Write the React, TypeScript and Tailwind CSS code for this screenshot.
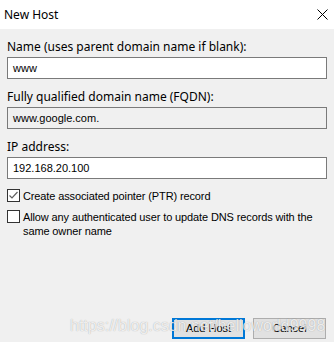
const ui = { fontFamily: '"Noto Sans", "Segoe UI", Arial, sans-serif' };
const ms = { fontFamily: '"Liberation Sans", Arial, sans-serif' };

const Field = ({ label, value, readOnly }: { label: string; value: string; readOnly?: boolean }) => {
  return (
    <div className="flex flex-col">
      <label className="text-[12px] leading-[14px] text-black">{label}</label>
      <div
        className={`mt-[3px] h-[22px] border border-[#7a7a7a] flex items-center pl-[5px] text-[11px] text-black ${
          readOnly ? "bg-[#f0f0f0]" : "bg-white"
        }`}
        style={ms}
      >
        {value}
      </div>
    </div>
  );
};

const Check = ({ checked, children }: { checked?: boolean; children: React.ReactNode }) => {
  return (
    <div className="flex items-start gap-[3px] text-[11px] leading-[14px] tracking-[-0.12px] text-black" style={ms}>
      <span className="w-[13px] h-[13px] border border-[#333] bg-white flex items-center justify-center shrink-0">
        {checked && (
          <svg width="11" height="11" viewBox="0 0 11 11">
            <polyline points="1.5,5.5 4,8 9.5,2" fill="none" stroke="#606060" strokeWidth="1.2" />
          </svg>
        )}
      </span>
      <span className="pt-[0px]">{children}</span>
    </div>
  );
};

export default function App() {
  return (
    <div className="relative w-[334px] h-[342px] flex flex-col bg-[#f0f0f0] overflow-hidden" style={ui}>
      <div className="h-[29px] bg-white flex items-center justify-between pl-[4px] pr-[6px] shrink-0">
        <span className="text-[12px] text-black">New Host</span>
        <svg width="11" height="11" viewBox="0 0 11 11">
          <path d="M0.5 0.5 L10.5 10.5 M10.5 0.5 L0.5 10.5" stroke="#000" strokeWidth="1" fill="none" />
        </svg>
      </div>

      <div className="flex-1 flex flex-col px-[7px] pt-[11px]">
        <div className="flex flex-col gap-[11px]">
          <Field label="Name (uses parent domain name if blank):" value="www" />
          <Field label="Fully qualified domain name (FQDN):" value="www.google.com." readOnly />
          <Field label="IP address:" value="192.168.20.100" />
        </div>

        <div className="mt-[10px] flex flex-col gap-[7px]">
          <Check checked>Create associated pointer (PTR) record</Check>
          <Check>Allow any authenticated user to update DNS records with the same owner name</Check>
        </div>

        <div className="mt-auto flex justify-end gap-[8px] pb-[3px] pr-[1px]" style={ms}>
          <button className="w-[73px] h-[21px] border-2 border-[#0078d7] bg-[#e1e1e1] text-[11px] text-black leading-none">
            Add Host
          </button>
          <button className="w-[73px] h-[21px] border border-[#adadad] bg-[#e1e1e1] text-[11px] text-black leading-none">
            Cancel
          </button>
        </div>
      </div>

      <div
        className="absolute left-[70px] top-[314px] text-[16px] leading-normal text-white/80 pointer-events-none whitespace-nowrap [text-shadow:0_0_1px_rgba(0,0,0,0.35)]"
        style={ms}
      >
        https://blog.csdn.net/helloworld9998
      </div>
    </div>
  );
}
